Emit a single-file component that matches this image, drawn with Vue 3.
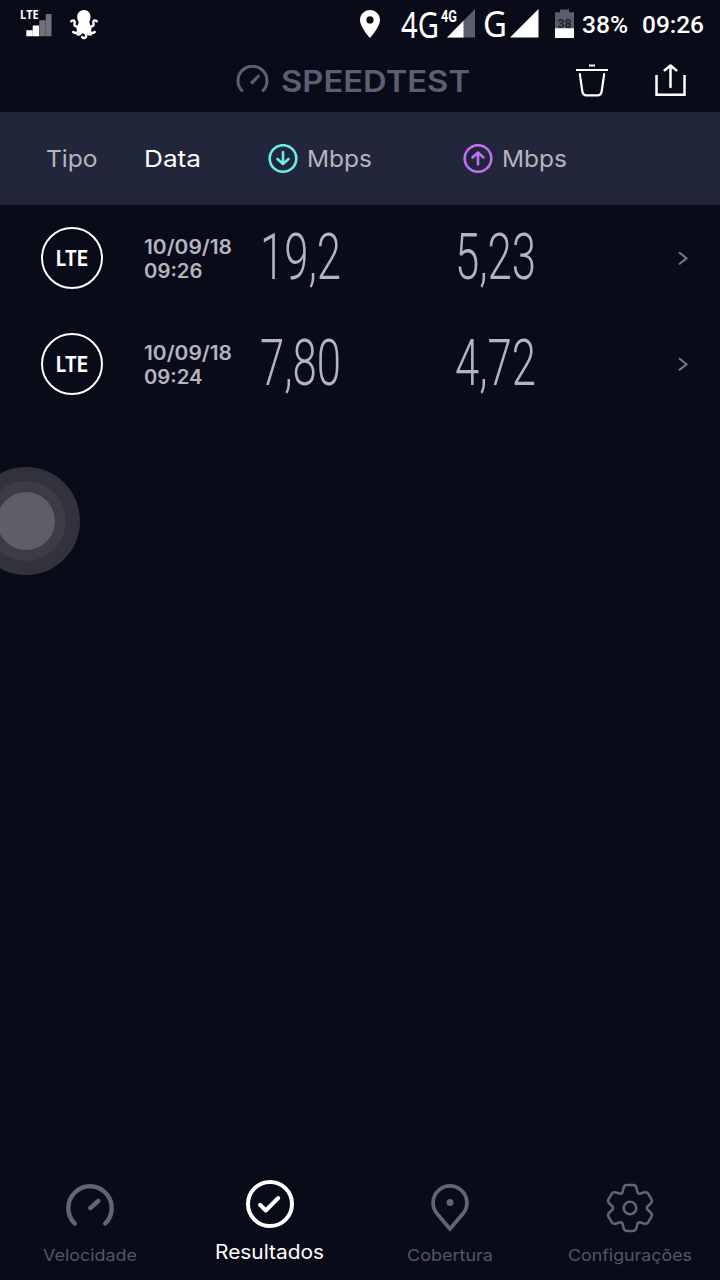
<template>
  <div class="screen">
    <!-- Status bar -->
    <div class="status-bar">
      <svg class="signal-left" width="34" height="50" viewBox="0 0 34 50">
        <text class="signal-label" x="0" y="19.3" textLength="18.5" lengthAdjust="spacingAndGlyphs">LTE</text>
        <path fill="#fff" d="M6.3 30.3h6.2V36.3H6.3zM12.7 25.5h6.5v10.8h-6.5z" />
        <path fill="#6f707a" d="M19.3 20.3h6.2v16h-6.2zM25.700 14h5.800v22.300h-5.800z" />
      </svg>
      <svg class="octopus" width="30" height="30" viewBox="0 0 30 30">
        <path fill="#fff" d="M14 0C18 0 20.500 3 20.500 6.500c0 2.500-.8 4-1.200 6l2.400 6.500-3.500 4.500h-8.400l-3.500-4.500 2.400-6.500C7.800 10.500 7.200 9 7.200 6.500 7.200 3 10 0 14 0z" />
        <path
          fill="none"
          stroke="#fff"
          stroke-width="2.4"
          stroke-linecap="round"
          d="M9.500 17C5 17 4 15.500 4.600 13 5 10.500 3.500 9.500 1.300 11.200M18.500 17c4.500 0 5.500-1.500 4.900-4-.4-2.500 1.100-3.500 3.300-1.800M9 18.500c-.5 4.500-3 5.500-5.800 3.500M19 18.500c.5 4.500 3 5.500 5.800 3.500M11.500 20.500c-.5 3-1.800 4.300-3.800 4M17 20.500c.4 2.800 1.800 4.300 3.800 4M14.200 22c2.500 2 2.700 4.700 1 5.700-1.200.6-2.400.4-3-.6"
        />
      </svg>

      <svg class="status-pin" width="20" height="28" viewBox="0 0 20 28">
        <path fill="#fff" fill-rule="evenodd" d="M10 0C4.500 0 0 4.400 0 10c0 7 10 18 10 18s10-11 10-18C20 4.400 15.500 0 10 0zm0 6.300a3.600 3.600 0 1 1 0 7.200 3.600 3.600 0 0 1 0-7.200z" />
      </svg>
      <FitText class="network" text="4G" :width="38" :size="36" :height="50" :baseline="37.500" />
      <svg class="signal" width="37" height="50" viewBox="0 0 37 50">
        <path fill="#5d5e69" d="M36 9v28.500H8z" />
        <path fill="#fff" d="M24.500 20.700v16.800H8z" />
        <text class="signal-tag" x="2" y="22" textLength="16" lengthAdjust="spacingAndGlyphs">4G</text>
      </svg>
      <FitText class="network second" text="G" :width="24" :size="36" :height="50" :baseline="37" />
      <svg class="signal-full" width="29" height="50" viewBox="0 0 29 50">
        <path fill="#fff" d="M28.500 9v28.500H0z" />
      </svg>
      <svg class="battery" width="19" height="50" viewBox="0 0 19 50">
        <path fill="#5d5e69" d="M0 12.300h5V9.500h9v2.800h5V29H0z" />
        <path fill="#fff" d="M0 28.300h19V38H0z" />
        <text class="battery-label" x="2.500" y="28" textLength="14" lengthAdjust="spacingAndGlyphs">38</text>
      </svg>
      <FitText class="clock percent" text="38%" :width="46" :size="24" :height="50" :baseline="33" />
      <FitText class="clock" text="09:26" :width="62" :size="24" :height="50" :baseline="33" />
    </div>

    <!-- App header -->
    <header class="app-header">
      <div class="brand">
        <svg width="33" height="30" viewBox="0 0 33 30" fill="none" stroke="#5d5e72">
          <path stroke-width="3" d="M6.800 26.500A14.500 14.500 0 1 1 26.200 26.500" />
          <path fill="#5d5e72" stroke="none" d="M22.500 9.300L24.300 11 16.500 19.700 13.800 17.200z" />
        </svg>
        <FitText class="brand-name" text="SPEEDTEST" :width="189" :size="30" :height="62" :baseline="42" />
      </div>
      <svg class="trash" width="32" height="34" viewBox="0 0 32 34" fill="none" stroke="#fff" stroke-width="2.200">
        <path d="M13 1.500h6M0 6h32" />
        <path stroke-linecap="round" d="M3.800 10l2.600 17.800q.6 3.500 4 3.500h11.200q3.400 0 4-3.500L28.200 10" />
      </svg>
      <svg class="share" width="31" height="34" viewBox="0 0 31 34" fill="none" stroke="#fff" stroke-width="2.500">
        <path d="M1.500 11v19.700h28V11" />
        <path stroke-linecap="round" stroke-linejoin="round" d="M15.500 23V1.500M9.700 6.300L15.500 1.500l5.800 4.800" />
      </svg>
    </header>

    <!-- Column titles -->
    <div class="columns table-head">
      <FitText class="col-type" text="Tipo" :width="51.500" :size="23.500" :height="93" :baseline="55" />
      <FitText class="col-date" text="Data" :width="57" :size="23.500" :height="93" :baseline="55" />
      <div class="col-speed">
        <svg class="down" width="30" height="30" viewBox="0 0 30 30">
          <circle cx="15" cy="14.500" r="13.300" />
          <path d="M15 8v11.500M9.500 15L15 20l5.500-5" />
        </svg>
        <FitText text="Mbps" :width="65" :size="23.500" :height="93" :baseline="55" />
      </div>
      <div class="col-speed">
        <svg class="up" width="30" height="30" viewBox="0 0 30 30">
          <circle cx="15" cy="14.500" r="13.300" />
          <path d="M15 20.500v-12M9.500 13.500L15 8.500l5.500 5" />
        </svg>
        <FitText text="Mbps" :width="65" :size="23.500" :height="93" :baseline="55" />
      </div>
    </div>

    <!-- Results -->
    <div v-for="result in results" :key="result.time" class="columns result">
      <div class="badge">
        <FitText text="LTE" :width="32" :size="21" :height="58" :baseline="37" />
      </div>
      <div class="date">
        <FitText :text="result.date" :width="88" :size="19.500" :height="24" :baseline="19.500" />
        <FitText :text="result.time" :width="58.500" :size="19.500" :height="24" :baseline="19.500" />
      </div>
      <FitText class="speed" :text="result.download" :width="81" :size="64.500" :height="106" :baseline="74" />
      <FitText class="speed" :text="result.upload" :width="81" :size="64.500" :height="106" :baseline="74" />
      <svg class="chevron" width="10" height="14" viewBox="0 0 10 14">
        <path d="M1 1.300l7.500 6L1 13.300" />
      </svg>
    </div>

    <!-- Assistive touch bubble -->
    <div class="bubble"><div class="bubble-ring"><div class="bubble-core"></div></div></div>

    <!-- Bottom navigation -->
    <nav class="tabs">
      <div class="tab">
        <svg width="50" height="50" viewBox="0 0 50 50">
          <path stroke-width="4.500" d="M9.800 40.500A21.700 21.700 0 1 1 40.200 40.500M25.300 25l8-7" />
        </svg>
        <FitText text="Velocidade" :width="94" :size="16.500" :height="26" :baseline="18" />
      </div>
      <div class="tab active">
        <svg width="50" height="50" viewBox="0 0 50 50">
          <circle stroke-width="4" cx="25" cy="25" r="22" />
          <path stroke-width="4" d="M15 25.800l5.800 5.700L33.200 19" />
        </svg>
        <FitText text="Resultados" :width="109" :size="19.500" :height="26" :baseline="20" />
      </div>
      <div class="tab">
        <svg width="50" height="50" viewBox="0 0 50 50">
          <path class="sharp" stroke-width="3.700" d="M25 46L11.500 30A16.900 16.900 0 1 1 38.500 30z" />
          <circle class="dot" cx="25" cy="19.500" r="3.500" />
        </svg>
        <FitText text="Cobertura" :width="86" :size="16.500" :height="26" :baseline="18" />
      </div>
      <div class="tab">
        <svg width="50" height="50" viewBox="-25 -25 50 50">
          <path stroke-width="2.500" :d="gearPath" />
          <circle stroke-width="2.600" r="6.300" />
        </svg>
        <FitText text="Configurações" :width="124" :size="16.500" :height="26" :baseline="18" />
      </div>
    </nav>
  </div>
</template>

<script setup>
import { h } from 'vue'

// Text set to a fixed width, glyphs are stretched or condensed to fill it
const FitText = (props) =>
  h('svg', { width: props.width, height: props.height, style: { overflow: 'visible' } }, [
    h(
      'text',
      {
        x: 0,
        y: props.baseline,
        textLength: props.width,
        lengthAdjust: 'spacingAndGlyphs',
        'font-size': props.size,
        fill: 'currentColor',
      },
      props.text
    ),
  ])
FitText.props = ['text', 'width', 'size', 'height', 'baseline']

const results = [
  { date: '10/09/18', time: '09:26', download: '19,2', upload: '5,23' },
  { date: '10/09/18', time: '09:24', download: '7,80', upload: '4,72' },
]

// One tooth of the gear, repeated every 60 degrees
const tooth = [
  [-7.6, -15.2],
  [-6.5, -19.8],
  [-5.8, -22.9],
  [-3.4, -22.9],
  [3.4, -22.9],
  [5.8, -22.9],
  [6.5, -19.8],
  [7.6, -15.2],
]

const buildGear = () => {
  let d = ''
  for (let i = 0; i < 6; i++) {
    const a = (i * Math.PI) / 3
    const p = tooth.map(([x, y]) => {
      const rx = x * Math.cos(a) - y * Math.sin(a)
      const ry = x * Math.sin(a) + y * Math.cos(a)
      return `${rx.toFixed(2)} ${ry.toFixed(2)}`
    })
    d += `${i ? 'L' : 'M'}${p[0]}L${p[1]}Q${p[2]} ${p[3]}L${p[4]}Q${p[5]} ${p[6]}L${p[7]}`
  }
  return d + 'Z'
}

const gearPath = buildGear()
</script>

<style>
body {
  margin: 0;
  background: #0a0b19;
}
</style>

<style scoped>
.screen {
  position: relative;
  display: flex;
  flex-direction: column;
  width: 720px;
  height: 1280px;
  overflow: hidden;
  background: #0a0b19;
  color: #b5b5bf;
  font-family: Inter, "Open Sans", sans-serif;
}

svg {
  display: block;
  flex-shrink: 0;
}

/* Status bar */
.status-bar {
  display: flex;
  height: 50px;
  color: #fff;
}

.signal-left {
  margin-left: 20px;
}

.signal-label {
  font: 700 11.5px "Open Sans", sans-serif;
  fill: #fff;
}

.octopus {
  margin: 10px 0 0 16px;
}

.status-pin {
  margin: 10px 21px 0 auto;
}

.network {
  font-family: "Noto Sans", sans-serif;
}

.network.second {
  margin-left: 7px;
}

.signal-tag {
  font: 700 16px Roboto, sans-serif;
  fill: #fff;
  stroke: #0a0b19;
  stroke-width: 1px;
  paint-order: stroke;
}

.signal-full {
  margin-left: 3px;
}

.battery {
  margin: 0 8px 0 16px;
}

.battery-label {
  font: 700 13px Roboto, sans-serif;
  fill: #20212d;
}

.clock {
  margin-right: 16px;
  font-family: Roboto, sans-serif;
  font-weight: 500;
}

.clock.percent {
  margin-right: 14px;
}

/* App header */
.app-header {
  display: flex;
  align-items: center;
  height: 62px;
}

.brand {
  display: flex;
  align-items: center;
  gap: 12px;
  margin: 0 106px 0 236px;
  color: #5d5e72;
}

.brand > svg:first-child {
  margin-top: -2px;
}

.brand-name {
  font-weight: 600;
}

.trash {
  margin-right: 47px;
}

/* Results table */
.columns {
  display: grid;
  grid-template-columns: 144px 116px 195px 195px 1fr;
  align-items: center;
}

.table-head {
  height: 93px;
  background: #22263a;
}

.col-type {
  margin-left: 46px;
}

.col-date {
  color: #fff;
}

.col-speed {
  display: flex;
  align-items: center;
  gap: 9px;
  padding-left: 8px;
}

.col-speed .down,
.col-speed .up {
  fill: none;
  stroke-width: 2.6;
  stroke-linecap: round;
  stroke-linejoin: round;
}

.down {
  stroke: #6aede3;
}

.up {
  stroke: #bf71f2;
}

.result {
  height: 106px;
}

.badge {
  box-sizing: border-box;
  display: flex;
  justify-content: center;
  width: 62px;
  height: 62px;
  margin-left: 41px;
  border: 2px solid #fff;
  border-radius: 50%;
  color: #fff;
  font-weight: 700;
}

.date {
  font-weight: 600;
}

.speed {
  font-family: Roboto, sans-serif;
  font-weight: 300;
}

.chevron {
  margin-left: 28px;
  fill: none;
  stroke: #777884;
  stroke-width: 2;
}

/* Floating bubble lies over the page edge */
.bubble {
  position: absolute;
  top: 467px;
  left: -28px;
  display: grid;
  place-items: center;
  width: 108px;
  height: 108px;
  border-radius: 50%;
  background: #32323b;
}

.bubble-ring {
  display: grid;
  place-items: center;
  width: 80px;
  height: 80px;
  border-radius: 50%;
  background: #3c3c46;
}

.bubble-core {
  width: 58px;
  height: 58px;
  border-radius: 50%;
  background: #5e5e67;
}

/* Bottom navigation */
.tabs {
  display: grid;
  grid-template-columns: repeat(4, 1fr);
  height: 97px;
  margin-top: auto;
}

.tab {
  display: flex;
  flex-direction: column;
  align-items: center;
  gap: 10px;
  color: #555664;
}

.tab > svg:first-child {
  fill: none;
  stroke: #626375;
  stroke-linecap: round;
  stroke-linejoin: round;
}

.tab > svg:last-child {
  margin-right: 1px;
}

.tab .sharp {
  stroke-linejoin: miter;
}

.tab .dot {
  fill: #626375;
  stroke: none;
}

.tab.active {
  margin-top: -4px;
  color: #fff;
}

.tab.active > svg:first-child {
  stroke: #fff;
}
</style>
